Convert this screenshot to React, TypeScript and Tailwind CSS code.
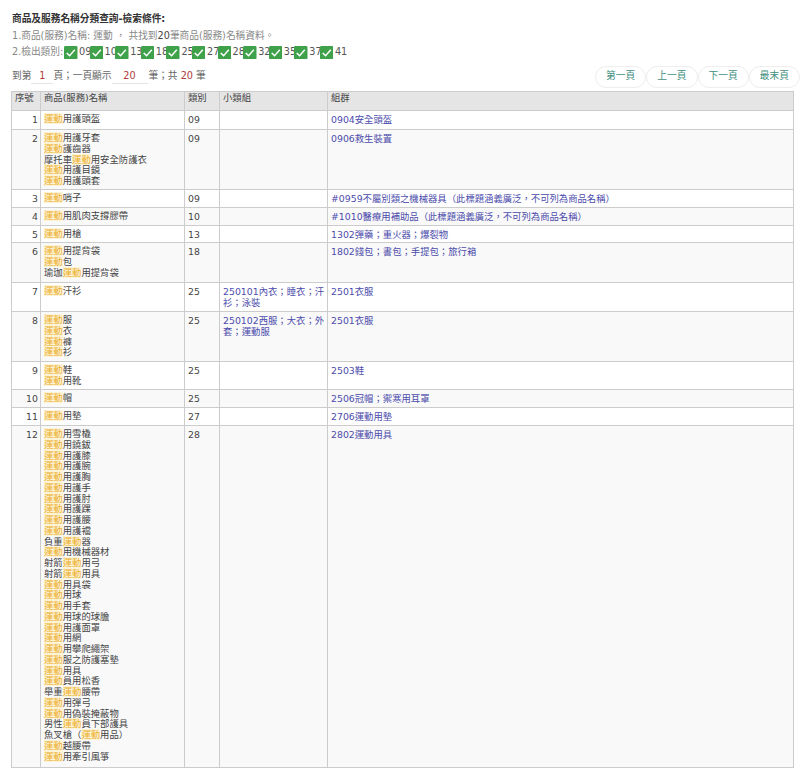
import React from "react";

const font = "[font-family:'DejaVu_Sans','Noto_Sans_CJK_TC',sans-serif]";
const codes = ["09", "10", "13", "18", "25", "27", "28", "32", "35", "37", "41"];
const pageButtons = ["第一頁", "上一頁", "下一頁", "最末頁"];

interface Row {
  no: number;
  names: string[];
  cls: string;
  sub?: string;
  group: string;
  h: string;
}

const rows: Row[] = [
  { no: 1, names: ["運動用護頭盔"], cls: "09", group: "0904安全頭盔", h: "h-[19px]" },
  {
    no: 2,
    names: ["運動用護牙套", "運動護齒器", "摩托車運動用安全防護衣", "運動用護目鏡", "運動用護頭套"],
    cls: "09",
    group: "0906救生裝置",
    h: "h-[60px]",
  },
  { no: 3, names: ["運動哨子"], cls: "09", group: "#0959不屬別類之機械器具（此標題涵義廣泛，不可列為商品名稱）", h: "h-[18px]" },
  { no: 4, names: ["運動用肌肉支撐膠帶"], cls: "10", group: "#1010醫療用補助品（此標題涵義廣泛，不可列為商品名稱）", h: "h-[18px]" },
  { no: 5, names: ["運動用槍"], cls: "13", group: "1302彈藥；重火器；爆裂物", h: "h-[17px]" },
  { no: 6, names: ["運動用提背袋", "運動包", "瑜珈運動用提背袋"], cls: "18", group: "1802錢包；書包；手提包；旅行箱", h: "h-[40px]" },
  { no: 7, names: ["運動汗衫"], cls: "25", sub: "250101內衣；睡衣；汗衫；泳裝", group: "2501衣服", h: "h-[29px]" },
  { no: 8, names: ["運動服", "運動衣", "運動褲", "運動衫"], cls: "25", sub: "250102西服；大衣；外套；運動服", group: "2501衣服", h: "h-[50px]" },
  { no: 9, names: ["運動鞋", "運動用靴"], cls: "25", group: "2503鞋", h: "h-[28px]" },
  { no: 10, names: ["運動帽"], cls: "25", group: "2506冠帽；禦寒用耳罩", h: "h-[18px]" },
  { no: 11, names: ["運動用墊"], cls: "27", group: "2706運動用墊", h: "h-[18px]" },
  {
    no: 12,
    names: [
      "運動用雪橇",
      "運動用鐃鈸",
      "運動用護膝",
      "運動用護腕",
      "運動用護胸",
      "運動用護手",
      "運動用護肘",
      "運動用護踝",
      "運動用護腰",
      "運動用護襠",
      "負重運動器",
      "運動用機械器材",
      "射箭運動用弓",
      "射箭運動用具",
      "運動用具袋",
      "運動用球",
      "運動用手套",
      "運動用球的球膽",
      "運動用護面罩",
      "運動用網",
      "運動用攀爬繩架",
      "運動服之防護塞墊",
      "運動用具",
      "運動員用松香",
      "舉重運動腰帶",
      "運動用彈弓",
      "運動用偽裝掩蔽物",
      "男性運動員下部護具",
      "魚叉槍（運動用品）",
      "運動越腰帶",
      "運動用牽引風箏",
    ],
    cls: "28",
    group: "2802運動用具",
    h: "h-[342px]",
  },
];

function Check() {
  return (
    <svg viewBox="0 0 14 14" className="w-[13.5px] h-[13.5px] mr-[1.5px] shrink-0">
      <rect width="14" height="14" rx="1.5" fill="#3fa24a" />
      <path d="M2.8 7.2 L5.8 10 L11.2 4" fill="none" stroke="#fff" strokeWidth="1.5" />
    </svg>
  );
}

// 運動 gets the search-hit highlight
function Name({ text }: { text: string }) {
  const parts = text.split("運動");
  return (
    <div className="h-[10.75px] leading-[10.75px] whitespace-nowrap">
      {parts.map((part, i) => (
        <React.Fragment key={i}>
          {i > 0 && <span className="bg-[#fdf3d6] text-[#ecb02f]">運動</span>}
          {part}
        </React.Fragment>
      ))}
    </div>
  );
}

export default function App() {
  const cell = "border border-[#cccccc] align-top pl-[3px] leading-[11px]";
  return (
    <div className={`${font} w-[800px] h-[768px] overflow-hidden bg-white text-[9.7px] text-[#444444]`}>
      <div className="pl-[12px] pt-[11px]">
        <div className="h-[17px] leading-[15px] font-semibold text-[#333333]">商品及服務名稱分類查詢-檢索條件:</div>
        <div className="h-[17px] leading-[15px] text-[#888888]">
          1.商品(服務)名稱: 運動 ， 共找到<span className="text-[#444444]">20</span>筆商品(服務)名稱資料。
        </div>
        <div className="flex items-center h-[15px] text-[#888888]">
          <span className="w-[52px] whitespace-nowrap">2.檢出類別:</span>
          {codes.map((c) => (
            <span key={c} className="flex items-center w-[25.6px]">
              <Check />
              <span className="text-[#555555]">{c}</span>
            </span>
          ))}
        </div>
      </div>
      <div className="flex items-center justify-between pl-[12px] h-[23px] mt-[5px]">
        <div className="flex items-center text-[#666666]">
          <span>到第</span>
          <span className="w-[22px] text-center text-[#b03a3a] border-b border-[#e4e4e4]">1</span>
          <span>頁；一頁顯示</span>
          <span className="w-[36px] mr-[1px] text-center text-[#b03a3a] border-b border-[#e4e4e4]">20</span>
          <span>
            筆；共 <span className="text-[#b03a3a]">20</span> 筆
          </span>
        </div>
        <div className="flex">
          {pageButtons.map((b) => (
            <span
              key={b}
              className="flex items-center justify-center w-[51.25px] h-[22px] rounded-full border border-[#eeeeee] bg-white text-[#3f8f80]"
            >
              {b}
            </span>
          ))}
        </div>
      </div>
      <table className="ml-[11px] mt-[3px] w-[783px] table-fixed border-collapse text-[9.35px]">
        <colgroup>
          <col className="w-[29px]" />
          <col className="w-[144px]" />
          <col className="w-[35px]" />
          <col className="w-[108px]" />
          <col />
        </colgroup>
        <thead>
          <tr className="h-[19px] bg-[#e5e5e5] text-left">
            <th className={`${cell} font-normal align-middle`}>序號</th>
            <th className={`${cell} font-normal align-middle`}>商品(服務)名稱</th>
            <th className={`${cell} font-normal align-middle`}>類別</th>
            <th className={`${cell} font-normal align-middle`}>小類組</th>
            <th className={`${cell} font-normal align-middle`}>組群</th>
          </tr>
        </thead>
        <tbody>
          {rows.map((r) => (
            <tr key={r.no} className={`${r.h} ${r.no % 2 === 0 ? "bg-[#f9f9f9]" : "bg-white"}`}>
              <td className={`${cell} pt-[3px] pr-[2px] text-right`}>{r.no}</td>
              <td className={`${cell} pt-[3px]`}>
                {r.names.map((n, i) => (
                  <Name key={i} text={n} />
                ))}
              </td>
              <td className={`${cell} pt-[3px]`}>{r.cls}</td>
              <td className={`${cell} pt-[3px] text-[#4b4bab]`}>{r.sub}</td>
              <td className={`${cell} pt-[3px] text-[#4b4bab]`}>{r.group}</td>
            </tr>
          ))}
        </tbody>
      </table>
    </div>
  );
}
